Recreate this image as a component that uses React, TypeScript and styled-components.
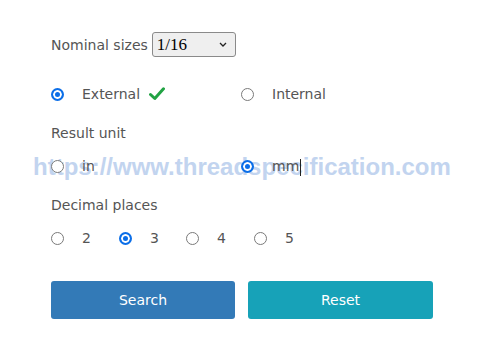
import React from 'react';
import styled, { createGlobalStyle } from 'styled-components';

const GlobalStyle = createGlobalStyle`
  body {
    margin: 0;
    background: #ffffff;
    font-family: 'DejaVu Sans', Verdana, sans-serif;
  }
`;

// Styles
const Page = styled.div`
  position: relative;
  width: 500px;
  height: 350px;
  overflow: hidden;
  background: #fff;
`;

const Form = styled.form`
  position: relative;
  z-index: 1;
  width: 382px;
  padding: 32px 0 0 51px;
  color: #555;
  font-size: 14px;
`;

const SizeRow = styled.div`
  display: flex;
  align-items: center;
  gap: 4px;
  height: 25px;
`;

const SelectWrap = styled.div`
  position: relative;
  width: 84px;
  height: 25px;

  svg {
    position: absolute;
    right: 9px;
    top: 10px;
    pointer-events: none;
  }
`;

const Select = styled.select`
  appearance: none;
  width: 100%;
  height: 100%;
  box-sizing: border-box;
  padding: 0 0 0 4px;
  border: 1px solid #8a8a8a;
  border-radius: 3px;
  background: #efefef;
  color: #000;
  font-family: 'Liberation Serif', 'Times New Roman', serif;
  font-size: 17px;
`;

const Label = styled.div<{ $top: number }>`
  margin-top: ${(p) => p.$top}px;
  height: 20px;
  line-height: 20px;
`;

const RadioRow = styled.div<{ $top: number; $cols: string }>`
  display: grid;
  grid-template-columns: ${(p) => p.$cols};
  margin-top: ${(p) => p.$top}px;
  height: 20px;
`;

const Option = styled.label`
  display: flex;
  align-items: center;
  gap: 18px;
  line-height: 20px;
`;

const Radio = styled.input.attrs({ type: 'radio' })`
  appearance: none;
  margin: 0;
  width: 13px;
  height: 13px;
  box-sizing: border-box;
  border: 1.5px solid #7a7a7a;
  border-radius: 50%;
  background: #fff;

  &:checked {
    border: 2px solid #0b6ee8;
    background: #0b6ee8;
    box-shadow: inset 0 0 0 2px #fff;
  }
`;

const Caret = styled.span`
  display: inline-block;
  width: 1px;
  height: 17px;
  margin-left: 1px;
  vertical-align: middle;
  background: #222;
`;

const Buttons = styled.div`
  display: grid;
  grid-template-columns: 184px 185px;
  gap: 13px;
  margin-top: 33px;
`;

const Button = styled.button<{ $tone: string }>`
  height: 38px;
  border: none;
  border-radius: 3px;
  background: ${(p) => p.$tone};
  color: #fff;
  font-family: 'DejaVu Sans', Verdana, sans-serif;
  font-size: 14px;
`;

const Watermark = styled.div`
  position: absolute;
  left: 33px;
  top: 155px;
  z-index: 0;
  font-family: 'Liberation Sans', Arial, sans-serif;
  font-weight: bold;
  font-size: 24px;
  line-height: 24px;
  color: #c2d4ef;
  white-space: nowrap;
`;

const Check = () => (
  <svg width="16" height="14" viewBox="0 0 16 14" style={{ marginLeft: -9 }}>
    <path d="M1.5 7.5 L5.8 11.5 L14.5 1.8" fill="none" stroke="#22a344" strokeWidth="3" strokeLinecap="round" strokeLinejoin="round" />
  </svg>
);

const App: React.FC = () => {
  return (
    <Page>
      <GlobalStyle />
      <Watermark>https://www.threadspecification.com</Watermark>
      <Form onSubmit={(e) => e.preventDefault()}>
        <SizeRow>
          <span>Nominal sizes</span>
          <SelectWrap>
            <Select defaultValue="1/16">
              <option>1/16</option>
              <option>5/64</option>
              <option>3/32</option>
            </Select>
            <svg width="8" height="5" viewBox="0 0 8 5">
              <path d="M1 1 L4 4 L7 1" fill="none" stroke="#222" strokeWidth="1.3" />
            </svg>
          </SelectWrap>
        </SizeRow>

        <RadioRow $top={27} $cols="190px 1fr">
          <Option>
            <Radio name="kind" defaultChecked />
            External
            <Check />
          </Option>
          <Option>
            <Radio name="kind" />
            Internal
          </Option>
        </RadioRow>

        <Label $top={19}>Result unit</Label>
        <RadioRow $top={13} $cols="190px 1fr">
          <Option>
            <Radio name="unit" />
            in
          </Option>
          <Option>
            <Radio name="unit" defaultChecked />
            <span>
              mm
              <Caret />
            </span>
          </Option>
        </RadioRow>

        <Label $top={19}>Decimal places</Label>
        <RadioRow $top={13} $cols="68px 67px 68px 68px">
          {['2', '3', '4', '5'].map((d) => (
            <Option key={d}>
              <Radio name="places" defaultChecked={d === '3'} />
              {d}
            </Option>
          ))}
        </RadioRow>

        <Buttons>
          <Button type="submit" $tone="#337ab7">Search</Button>
          <Button type="reset" $tone="#17a2b8">Reset</Button>
        </Buttons>
      </Form>
    </Page>
  );
};

export default App;
